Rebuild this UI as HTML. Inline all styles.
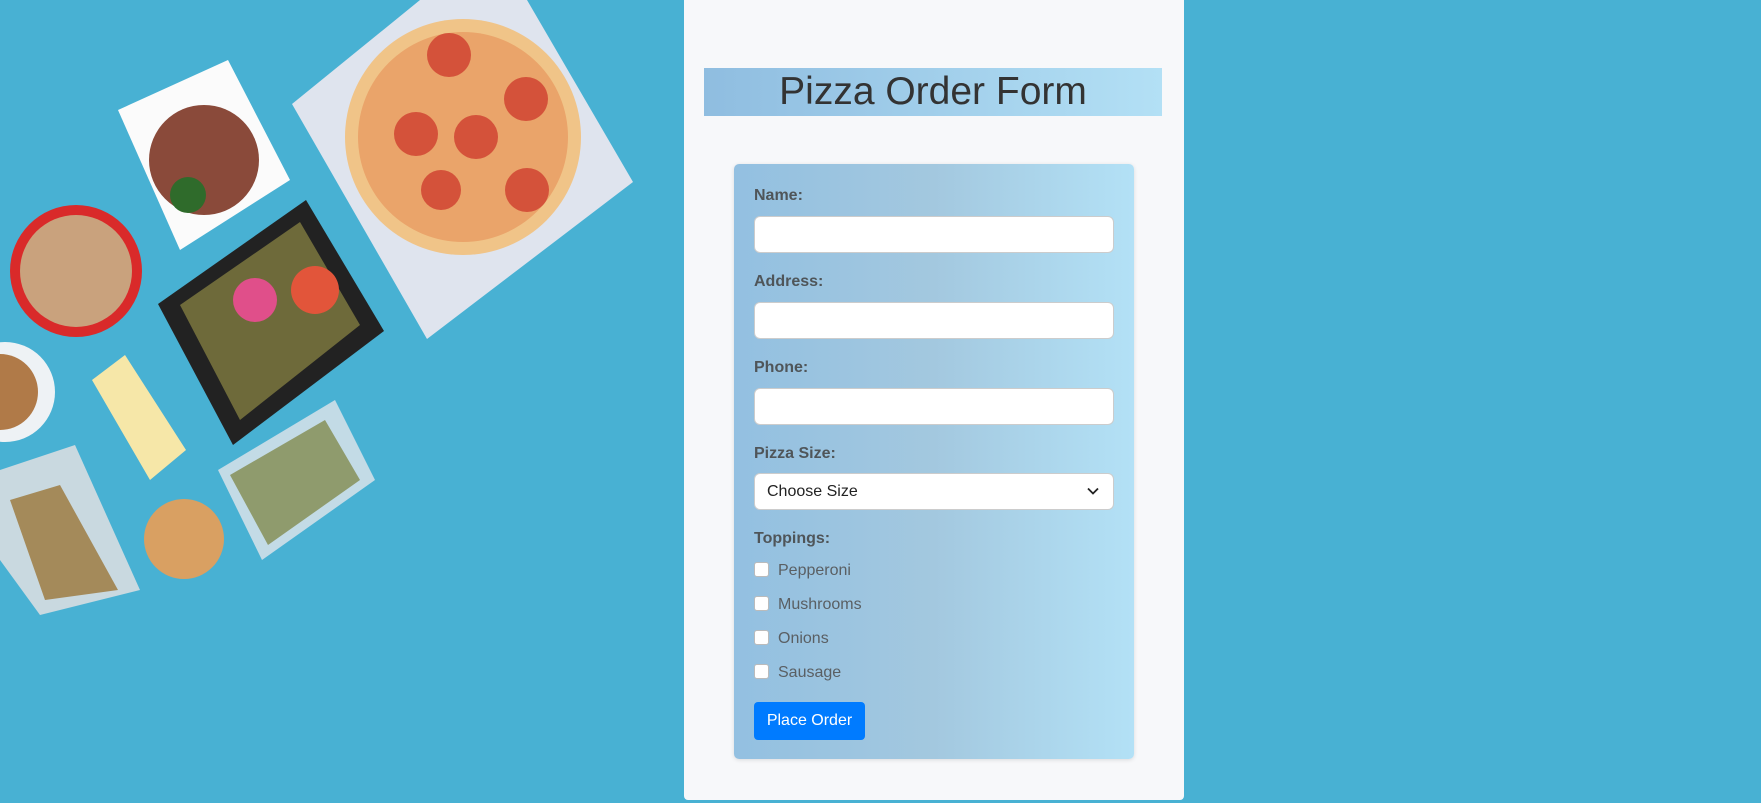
<!DOCTYPE html>
<html><head><meta charset="utf-8"><style>
html,body{margin:0;padding:0;width:1761px;height:803px;overflow:hidden;background:#48b1d3;font-family:"Liberation Sans",Arial,sans-serif}
#food{position:absolute;left:0;top:0}
.wrap{position:absolute;left:684px;top:0;width:500px;height:800px;background:#f7f8fa;border-radius:0 0 4px 4px}
h1{position:absolute;left:20px;top:68px;width:458px;height:48px;margin:0;background:linear-gradient(90deg,#8fbde0,#b3e0f5);text-align:center;font-weight:normal;font-size:39px;line-height:48px;color:#333}
.form{position:absolute;left:50px;top:164px;width:400px;height:595px;border-radius:5px;background:linear-gradient(90deg,#93c0e1 0%,#a3c8df 50%,#b3e1f6 100%);box-shadow:0 1px 4px rgba(0,0,0,.12)}
label.l{position:absolute;left:20px;font-weight:bold;font-size:16px;color:#4f5559}
.in{position:absolute;left:20px;width:358px;height:35px;background:#fff;border:1px solid #ccc;border-radius:6px}
.sel{font-size:16px;color:#222;line-height:35px;padding-left:12px;box-sizing:content-box;width:346px}
.cb{position:absolute;left:20px;font-size:16px;color:#5a5f63}
.cb i{display:inline-block;width:13px;height:13px;background:#fff;border:1px solid #bbb;border-radius:3px;vertical-align:-2px;margin-right:9px}
.btn{position:absolute;left:20px;top:538px;width:111px;height:38px;background:#007bff;color:#fff;border-radius:4px;font-size:16px;line-height:38px;text-align:center}
</style></head><body>
<svg id="food" width="640" height="640" viewBox="0 0 640 640">
<polygon points="292,104 420,0 527,0 633,182 427,339" fill="#dfe4ee"/>
<circle cx="463" cy="137" r="118" fill="#f0c488"/>
<circle cx="463" cy="137" r="105" fill="#eaa46a"/>
<g fill="#d4523a"><circle cx="449" cy="55" r="22"/><circle cx="526" cy="99" r="22"/><circle cx="416" cy="134" r="22"/><circle cx="476" cy="137" r="22"/><circle cx="441" cy="190" r="20"/><circle cx="527" cy="190" r="22"/></g>
<polygon points="158,304 306,200 384,331 233,445" fill="#222"/>
<polygon points="180,305 300,222 360,325 240,420" fill="#6e6a3a"/>
<circle cx="255" cy="300" r="22" fill="#e04f8a"/><circle cx="315" cy="290" r="24" fill="#e2553a"/>
<circle cx="76" cy="271" r="66" fill="#d92a2a"/><circle cx="76" cy="271" r="56" fill="#c9a27d"/>
<polygon points="118,110 228,60 290,180 180,250" fill="#fbfbfb"/>
<circle cx="204" cy="160" r="55" fill="#8a4a3a"/><circle cx="188" cy="195" r="18" fill="#2f6b2b"/>
<circle cx="5" cy="392" r="50" fill="#eef2f5"/><circle cx="0" cy="392" r="38" fill="#b07a48"/>
<polygon points="92,380 125,355 186,450 150,480" fill="#f6e7a8"/>
<polygon points="0,470 75,445 140,590 40,615 0,560" fill="#c9d9e0"/>
<polygon points="10,500 60,485 118,590 45,600" fill="#a48a5a"/>
<circle cx="184" cy="539" r="40" fill="#d9a062"/>
<polygon points="218,470 335,400 375,480 262,560" fill="#c3dbe6"/>
<polygon points="230,475 325,420 360,480 268,545" fill="#8f9b6d"/>
</svg>
<div class="wrap">
<h1>Pizza Order Form</h1>
<div class="form">
<label class="l" style="top:23px">Name:</label>
<div class="in" style="top:52px"></div>
<label class="l" style="top:109px">Address:</label>
<div class="in" style="top:138px"></div>
<label class="l" style="top:195px">Phone:</label>
<div class="in" style="top:224px"></div>
<label class="l" style="top:281px">Pizza Size:</label>
<div class="in sel" style="top:309px">Choose Size<svg style="position:absolute;right:14px;top:13px" width="12" height="8" viewBox="0 0 12 8"><path d="M1 1.5 6 6.5 11 1.5" fill="none" stroke="#222" stroke-width="1.8"/></svg></div>
<label class="l" style="top:366px">Toppings:</label>
<div class="cb" style="top:398px"><i></i>Pepperoni</div>
<div class="cb" style="top:432px"><i></i>Mushrooms</div>
<div class="cb" style="top:466px"><i></i>Onions</div>
<div class="cb" style="top:500px"><i></i>Sausage</div>
<div class="btn">Place Order</div>
</div>
</div>
</body></html>
